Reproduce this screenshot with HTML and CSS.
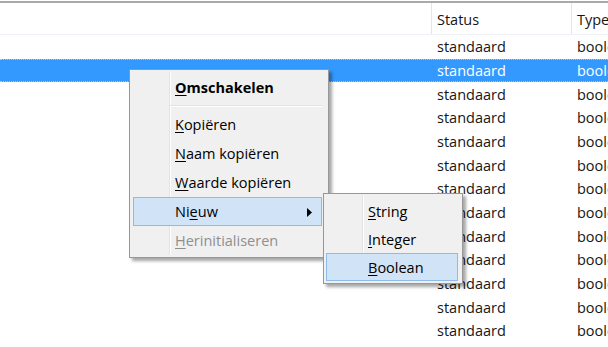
FILE: index.html
```html
<!DOCTYPE html>
<html lang="nl">
<head>
    <meta charset="UTF-8">
    <title>Configuratie</title>
    <link rel="stylesheet" href="styles.css">
</head>
<body>

    <div class="list">
        <div class="head">
            <div class="cell"></div>
            <div class="cell">Status</div>
            <div class="cell">Type</div>
        </div>
        <div class="row"><div class="cell"></div><div class="cell">standaard</div><div class="cell">boolean</div></div>
        <div class="row selected"><div class="cell"></div><div class="cell">standaard</div><div class="cell">boolean</div></div>
        <div class="row"><div class="cell"></div><div class="cell">standaard</div><div class="cell">boolean</div></div>
        <div class="row"><div class="cell"></div><div class="cell">standaard</div><div class="cell">boolean</div></div>
        <div class="row"><div class="cell"></div><div class="cell">standaard</div><div class="cell">boolean</div></div>
        <div class="row"><div class="cell"></div><div class="cell">standaard</div><div class="cell">boolean</div></div>
        <div class="row"><div class="cell"></div><div class="cell">standaard</div><div class="cell">boolean</div></div>
        <div class="row"><div class="cell"></div><div class="cell">standaard</div><div class="cell">boolean</div></div>
        <div class="row"><div class="cell"></div><div class="cell">standaard</div><div class="cell">boolean</div></div>
        <div class="row"><div class="cell"></div><div class="cell">standaard</div><div class="cell">boolean</div></div>
        <div class="row"><div class="cell"></div><div class="cell">standaard</div><div class="cell">boolean</div></div>
        <div class="row"><div class="cell"></div><div class="cell">standaard</div><div class="cell">boolean</div></div>
        <div class="row"><div class="cell"></div><div class="cell">standaard</div><div class="cell">boolean</div></div>
    </div>

    <!-- contextmenu -->
    <div class="menu main-menu">
        <div class="item bold"><span><u>O</u>mschakelen</span></div>
        <div class="sep"></div>
        <div class="item"><span><u>K</u>opiëren</span></div>
        <div class="item"><span><u>N</u>aam kopiëren</span></div>
        <div class="item"><span><u>W</u>aarde kopiëren</span></div>
        <div class="item active">
            <span>Ni<u>e</u>uw</span>
            <svg class="arrow" width="5" height="9" viewBox="0 0 5 9"><path d="M0 0 L5 4.5 L0 9 Z" fill="#000"/></svg>
        </div>
        <div class="item disabled"><span><u>H</u>erinitialiseren</span></div>
    </div>

    <div class="menu sub-menu">
        <div class="item"><span><u>S</u>tring</span></div>
        <div class="item"><span><u>I</u>nteger</span></div>
        <div class="item active"><span><u>B</u>oolean</span></div>
    </div>

</body>
</html>
```

FILE: styles.css
```css
body {
    margin: 0;
    background: #fff;
    font-family: "Open Sans", "Noto Sans", sans-serif;
    font-size: 14.5px;
    color: #161616;
    overflow: hidden;
}
.list {
    margin-top: 1px;
    border-top: 2px solid #a9a9a9;
}
.head, .row {
    display: grid;
    grid-template-columns: 432px 140px 1fr;
    white-space: nowrap;
    overflow: hidden;
}
.head {
    height: 32px;
    border-bottom: 1px solid #eef1f5;
    box-sizing: border-box;
}
.head .cell {
    border-right: 1px solid #e5e5e5;
    display: flex;
    align-items: center;
    padding-left: 5px;
    padding-top: 1px;
}
.head .cell:first-child {
    padding-left: 0;
}
.row {
    height: 23.67px;
    box-sizing: border-box;
}
.row .cell {
    display: flex;
    align-items: center;
    padding-left: 5px;
}
.row.selected {
    background: #3399ff;
    color: #fff;
    border-top: 1px dotted #9ecbff;
    border-bottom: 1px dotted #9ecbff;
}

/* menus */
.menu {
    position: absolute;
    background: #f0f0f0;
    border: 1px solid #979797;
    box-shadow: 3px 3px 3px rgba(0, 0, 0, 0.35);
    color: #000;
    box-sizing: border-box;
}
.menu::before {
    content: "";
    position: absolute;
    top: 2px;
    bottom: 2px;
    border-left: 1px solid #e2e3e3;
    border-right: 1px solid #fff;
}
.main-menu {
    left: 129px;
    top: 69px;
    width: 200px;
    padding: 3px 6px 2px 3px;
}
.main-menu::before {
    left: 39px;
}
.sub-menu {
    left: 323px;
    top: 193px;
    width: 140px;
    padding: 3px 4px 2px 2px;
}
.sub-menu::before {
    left: 38px;
}
.item {
    position: relative;
    height: 29px;
    display: flex;
    align-items: center;
    padding-left: 41px;
    border: 1px solid transparent;
    box-sizing: border-box;
}
.sub-menu .item {
    height: 28px;
}
.item u {
    text-decoration-thickness: 1px;
    text-underline-offset: 2px;
}
.bold {
    font-weight: bold;
}
.active {
    background: #d1e3f6;
    border-color: #8fbbe8;
}
.disabled {
    color: #8f8f8f;
}
.sep {
    height: 8px;
    position: relative;
}
.sep::after {
    content: "";
    position: absolute;
    left: 37px;
    right: 0;
    top: 3px;
    border-top: 1px solid #e2e3e3;
    border-bottom: 1px solid #fff;
}
.arrow {
    position: absolute;
    right: 9px;
    top: 10px;
}
```
